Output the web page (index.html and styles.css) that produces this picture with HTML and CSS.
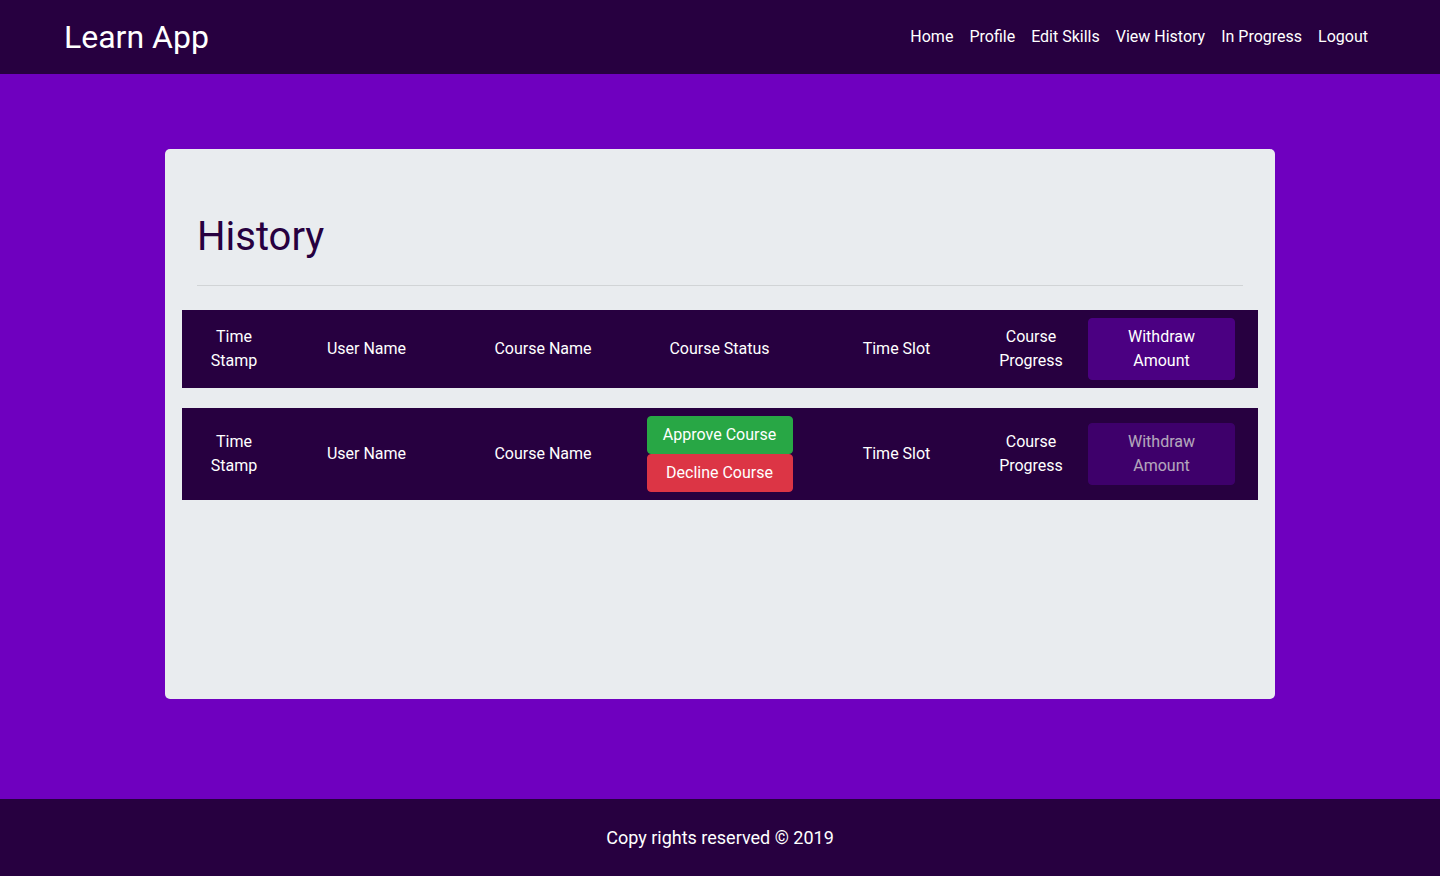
FILE: index.html
```html
<!DOCTYPE html>
<html lang="en">
<head>
<meta charset="utf-8">
<title>Learn App</title>
<link rel="stylesheet" href="styles.css">
</head>
<body>
<header class="navbar">
  <a class="brand" href="#">Learn App</a>
  <nav class="nav">
    <a href="#">Home</a>
    <a href="#">Profile</a>
    <a href="#">Edit Skills</a>
    <a href="#">View History</a>
    <a href="#">In Progress</a>
    <a href="#">Logout</a>
  </nav>
</header>
<main class="main">
  <section class="card">
    <h1 class="title">History</h1>
    <hr class="divider">
    <div class="trow head">
      <div class="cell">Time Stamp</div>
      <div class="cell">User Name</div>
      <div class="cell">Course Name</div>
      <div class="cell">Course Status</div>
      <div class="cell">Time Slot</div>
      <div class="cell">Course Progress</div>
      <div class="cell last"><button class="btn btn-withdraw">Withdraw Amount</button></div>
    </div>
    <div class="trow">
      <div class="cell">Time Stamp</div>
      <div class="cell">User Name</div>
      <div class="cell">Course Name</div>
      <div class="cell status">
        <button class="btn btn-approve">Approve Course</button>
        <button class="btn btn-decline">Decline Course</button>
      </div>
      <div class="cell">Time Slot</div>
      <div class="cell">Course Progress</div>
      <div class="cell last"><button class="btn btn-withdraw" disabled>Withdraw Amount</button></div>
    </div>
  </section>
</main>
<footer class="footer">Copy rights reserved © 2019</footer>
</body>
</html>
```

FILE: styles.css
```css
* { box-sizing: border-box; }
body {
  margin: 0;
  font-family: Roboto, "Liberation Sans", sans-serif;
  font-size: 16px;
  line-height: 1.5;
  color: #fff;
  background: #6f00bf;
}
.navbar {
  height: 74px;
  background: #270040;
  display: flex;
  align-items: center;
  justify-content: space-between;
  padding: 0 64px;
}
.brand {
  color: #fff;
  text-decoration: none;
  font-size: 32px;
  line-height: 1.2;
}
.nav { display: flex; }
.nav a {
  color: #fff;
  text-decoration: none;
  padding: 8px;
}
.main {
  padding: 75px 0 100px;
}
.card {
  width: 1110px;
  margin: 0 auto;
  min-height: 550px;
  background: #e9ecef;
  border-radius: 5px;
  padding: 64px 32px 32px;
}
.title {
  margin: 0 0 8px;
  font-size: 40px;
  font-weight: 400;
  line-height: 1.2;
  color: #270040;
}
.divider {
  border: 0;
  border-top: 1px solid rgba(0,0,0,0.1);
  margin: 24px 0 24px;
}
.trow {
  margin: 0 -15px 20px;
  background: #270040;
  padding: 8px 0 8px 8px;
  display: grid;
  grid-template-columns: 88px 177px 176px 177px 177px 92px 1fr;
  align-items: center;
}
.cell {
  text-align: center;
  padding: 0 10px;
}
.cell.last {
  padding: 0 0 0 11px;
  text-align: left;
}
.cell.status {
  display: flex;
  flex-direction: column;
  align-items: center;
  padding: 0;
}
.btn {
  font-family: inherit;
  font-size: 16px;
  line-height: 1.5;
  color: #fff;
  border: 1px solid transparent;
  border-radius: 4px;
  padding: 6px 12px;
  text-align: center;
  cursor: pointer;
  display: block;
}
.btn-withdraw {
  width: 147px;
  background: #4b0082;
  border-color: #4b0082;
}
.btn-withdraw:disabled {
  opacity: 0.65;
  cursor: default;
}
.btn-approve {
  width: 146px;
  background: #28a745;
  border-color: #28a745;
}
.btn-decline {
  width: 146px;
  background: #dc3545;
  border-color: #dc3545;
}
.footer {
  height: 77px;
  background: #270040;
  display: flex;
  align-items: center;
  justify-content: center;
  font-size: 18px;
}
```
